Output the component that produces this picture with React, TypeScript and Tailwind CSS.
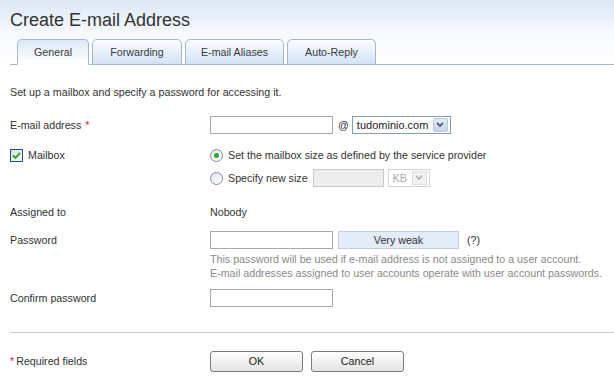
const tabs = ["General", "Forwarding", "E-mail Aliases", "Auto-Reply"];
const tabWidths = ["w-[72px]", "w-[90px]", "w-[99px]", "w-[89px]"];

function Checkbox() {
  return (
    <span className="flex h-[13px] w-[13px] items-center justify-center border border-[#1c5180] bg-gradient-to-br from-[#dcdcd7] to-white">
      <svg width="9" height="9" viewBox="0 0 9 9">
        <path d="M1 4.5 L3.5 7 L8 1.8" fill="none" stroke="#21a121" strokeWidth="1.8" />
      </svg>
    </span>
  );
}

function Radio({ on }: { on?: boolean }) {
  return (
    <span className="flex h-[13px] w-[13px] items-center justify-center rounded-full border border-[#7c8da3] bg-gradient-to-br from-[#e2e6ec] to-white">
      {on && <span className="h-[5px] w-[5px] rounded-full bg-[#2fa82f]" />}
    </span>
  );
}

function Chevron({ color }: { color: string }) {
  return (
    <svg width="8" height="6" viewBox="0 0 8 6">
      <path d="M1 1 L4 4 L7 1" fill="none" stroke={color} strokeWidth="1.8" />
    </svg>
  );
}

export default function App() {
  return (
    <div className="h-[387px] w-[614px] overflow-hidden bg-white font-['Liberation_Sans',Arial,sans-serif] text-[10.7px] text-[#333]">
      <div className="h-[65px] bg-gradient-to-b from-[#dbe7f6] via-[#f6f9fd] to-white">
        <h1 className="pl-[10px] pt-[10px] text-[18px] leading-[20px] text-[#333]">Create E-mail Address</h1>
        <div className="ml-[10px] mt-[9px] flex gap-[3px] border-b border-[#a7b6cf] pl-[7px]">
          {tabs.map((t, i) => (
            <div
              key={t}
              className={`${tabWidths[i]} -mb-px flex h-[26px] items-center justify-center rounded-t-[5px] border border-[#a7b6cf] text-[#3a3a3a] ${
                i === 0
                  ? "border-b-white bg-gradient-to-b from-[#dce8f7] to-white"
                  : "bg-gradient-to-b from-[#fbfdff] to-[#d2e2f6]"
              }`}
            >
              {t}
            </div>
          ))}
        </div>
      </div>

      <div className="px-[10px]">
        <p className="mt-[19px] leading-[16px]">Set up a mailbox and specify a password for accessing it.</p>

        <div className="mt-[16px] grid grid-cols-[200px_1fr]">
          <div className="flex items-center">
            E-mail address <span className="ml-[4px] text-[#d22]">*</span>
          </div>
          <div className="flex h-[18px] items-center">
            <span className="h-[18px] w-[123px] border border-[#a9a9a9] bg-white" />
            <span className="ml-[5px]">@</span>
            <span className="ml-[3px] flex h-[18px] w-[99px] items-center justify-between border border-[#7f9db9] bg-white pl-[4px] pr-[2px] text-[11px] text-[#222]">
              tudominio.com
              <span className="flex h-[14px] w-[15px] items-center justify-center rounded-[2px] border border-[#b8c6d8] bg-gradient-to-b from-[#e4ebf6] to-[#c7d4e8]">
                <Chevron color="#4d6185" />
              </span>
            </span>
          </div>

          <div className="mt-[12px] flex h-[18px] items-center gap-[5px]">
            <Checkbox />
            <span>Mailbox</span>
          </div>
          <div className="mt-[12px] flex h-[18px] items-center gap-[5px]">
            <Radio on />
            <span>Set the mailbox size as defined by the service provider</span>
          </div>

          <div />
          <div className="mt-[5px] flex h-[18px] items-center">
            <Radio />
            <span className="ml-[5px]">Specify new size</span>
            <span className="ml-[5px] h-[18px] w-[71px] border border-[#c9c9c9] bg-[#ededed]" />
            <span className="ml-[4px] flex h-[18px] w-[42px] items-center justify-between border border-[#d3d3d3] bg-white pl-[4px] pr-[2px] text-[#a8a8a8]">
              KB
              <span className="flex h-[14px] w-[15px] items-center justify-center border border-[#e0e0e0] bg-[#f1f1f1]">
                <Chevron color="#b8b8b8" />
              </span>
            </span>
          </div>

          <div className="mt-[16px] leading-[18px]">Assigned to</div>
          <div className="mt-[16px] leading-[18px]">Nobody</div>

          <div className="mt-[10px] flex h-[18px] items-center">Password</div>
          <div className="mt-[10px] flex h-[18px] items-center">
            <span className="h-[18px] w-[123px] border border-[#a9a9a9] bg-white" />
            <span className="ml-[5px] flex h-[18px] w-[121px] items-center justify-center border border-[#c3cfe0] bg-[#e3ecf8]">
              Very weak
            </span>
            <span className="ml-[8px]">(?)</span>
          </div>

          <div />
          <div className="mt-[3px] whitespace-nowrap leading-[14px] text-[#8a8a8a]">
            <p>This password will be used if e-mail address is not assigned to a user account.</p>
            <p>E-mail addresses assigned to user accounts operate with user account passwords.</p>
          </div>

          <div className="mt-[9px] flex h-[18px] items-center">Confirm password</div>
          <div className="mt-[9px] flex h-[18px] items-center">
            <span className="h-[18px] w-[123px] border border-[#a9a9a9] bg-white" />
          </div>
        </div>
      </div>

      <div className="ml-[10px] mt-[25px] border-t border-[#cfcfcf]" />

      <div className="mt-[18px] grid grid-cols-[200px_1fr] px-[10px]">
        <div className="flex items-center">
          <span className="text-[#d22]">*</span>
          <span className="ml-[2px]">Required fields</span>
        </div>
        <div className="flex gap-[8px]">
          <button className="h-[21px] w-[93px] rounded-[3px] border border-[#7b7b7b] bg-gradient-to-b from-white to-[#e3e3e3] text-[#222]">
            OK
          </button>
          <button className="h-[21px] w-[93px] rounded-[3px] border border-[#7b7b7b] bg-gradient-to-b from-white to-[#e3e3e3] text-[#222]">
            Cancel
          </button>
        </div>
      </div>
    </div>
  );
}
